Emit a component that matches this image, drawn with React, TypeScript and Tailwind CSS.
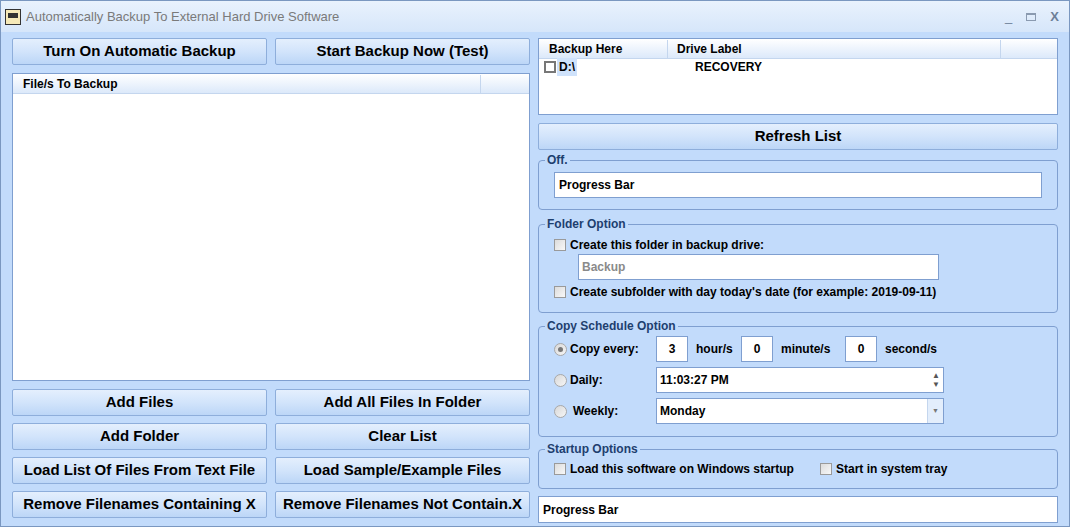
import React from "react";

const btn =
  "h-[27px] rounded-[2px] border border-[#8eaedb] bg-gradient-to-b from-[#e4effd] via-[#d2e4fb] to-[#bcd6f7] text-[15px] font-bold text-black flex items-center justify-center";
const group = "relative rounded-[4px] border border-[#7f9fd0] px-[15px]";
const legend =
  "absolute -top-[9px] left-[6px] bg-[#c2dbfb] px-[2px] text-[12px] font-bold leading-[16px] text-[#1e3f6f]";
const chk = "inline-block h-[12px] w-[12px] border border-[#9a9a9a] bg-gradient-to-br from-[#dcdcdc] to-[#f8f8f8]";
const radio = "inline-block h-[13px] w-[13px] rounded-full border border-[#a8a8a8] bg-gradient-to-br from-[#d8d8d8] to-[#f6f6f6]";
const field = "h-[26px] border border-[#7f9fd0] bg-white flex items-center";

export default function App() {
  return (
    <div
      className="h-[527px] w-[1070px] overflow-hidden border border-[#7a97c0] bg-[#c2dbfb] text-[12px] font-bold text-black"
      style={{ fontFamily: '"Liberation Sans", Arial, sans-serif' }}
    >
      <div className="flex h-[31px] items-center bg-gradient-to-b from-[#e9f2fd] to-[#d6e6fa] pl-[4px] pr-[10px] font-normal">
        <div className="mr-[5px] h-[16px] w-[16px] border border-[#333] bg-[#f5e9b8] text-[8px] leading-[14px]">
          <div className="mx-[2px] mt-[3px] h-[5px] bg-[#333]" />
        </div>
        <span className="text-[13px] text-[#7a7a7a]">Automatically Backup To External Hard Drive Software</span>
        <div className="ml-auto flex items-center gap-[14px] text-[13px] text-[#6d7f97]">
          <span>_</span>
          <span className="inline-block h-[8px] w-[10px] border border-[#8a9ab0] border-t-2" />
          <span className="font-bold">X</span>
        </div>
      </div>

      <div className="flex gap-[8px] px-[11px] pt-[6px]">
        {/* left */}
        <div className="flex w-[520px] flex-col">
          <div className="grid grid-cols-2 gap-[8px]">
            <div className={btn}>Turn On Automatic Backup</div>
            <div className={btn}>Start Backup Now (Test)</div>
          </div>
          <div className="mt-[8px] h-[308px] border border-[#7f9fd0] bg-white">
            <div className="flex h-[20px] items-center border-b border-[#c4d6ee] bg-gradient-to-b from-white to-[#dce9fa]">
              <span className="w-[468px] border-r border-[#c4d6ee] pl-[10px]">File/s To Backup</span>
            </div>
          </div>
          <div className="mt-[8px] grid grid-cols-2 gap-x-[8px] gap-y-[7px]">
            <div className={btn}>Add Files</div>
            <div className={btn}>Add All Files In Folder</div>
            <div className={btn}>Add Folder</div>
            <div className={btn}>Clear List</div>
            <div className={btn}>Load List Of Files From Text File</div>
            <div className={btn}>Load Sample/Example Files</div>
            <div className={btn}>Remove Filenames Containing X</div>
            <div className={btn}>Remove Filenames Not Contain.X</div>
          </div>
        </div>

        {/* right */}
        <div className="flex w-[520px] flex-col">
          <div className="h-[77px] border border-[#7f9fd0] bg-white">
            <div className="flex h-[20px] items-center border-b border-[#c4d6ee] bg-gradient-to-b from-white to-[#dce9fa]">
              <span className="w-[129px] border-r border-[#c4d6ee] pl-[10px]">Backup Here</span>
              <span className="w-[333px] border-r border-[#c4d6ee] pl-[9px]">Drive Label</span>
            </div>
            <div className="flex h-[16px] items-center pl-[5px]">
              <span className="inline-block h-[12px] w-[12px] border-2 border-[#777]" />
              <span className="ml-[1px] w-[20px] bg-[#cfe2fb] pl-[2px]">D:\</span>
              <span className="ml-[118px]">RECOVERY</span>
            </div>
          </div>
          <div className={btn + " mt-[8px]"}>Refresh List</div>

          <div className={group + " mt-[10px] h-[50px] pt-[11px]"}>
            <span className={legend}>Off.</span>
            <div className={field + " w-[488px] pl-[4px]"}>Progress Bar</div>
          </div>

          <div className={group + " mt-[14px] h-[89px] pt-[13px]"}>
            <span className={legend}>Folder Option</span>
            <div className="flex items-center gap-[4px] leading-[14px]">
              <span className={chk} />Create this folder in backup drive:
            </div>
            <div className={field + " mt-[2px] ml-[24px] h-[23px] w-[361px] pl-[3px] font-bold text-[#8a8a8a]"}>Backup</div>
            <div className="mt-[5px] flex items-center gap-[4px] leading-[14px]">
              <span className={chk} />Create subfolder with day today's date (for example: 2019-09-11)
            </div>
          </div>

          <div className={group + " mt-[13px] h-[111px] pt-[9px]"}>
            <span className={legend}>Copy Schedule Option</span>
            <div className="flex h-[26px] items-center">
              <span className={radio + " relative"}>
                <span className="absolute left-[3px] top-[3px] h-[5px] w-[5px] rounded-full bg-[#777]" />
              </span>
              <span className="ml-[3px] w-[86px]">Copy every:</span>
              <div className={field + " h-[24px] w-[32px] justify-center"}>3</div>
              <span className="ml-[8px] w-[45px]">hour/s</span>
              <div className={field + " h-[24px] w-[32px] justify-center"}>0</div>
              <span className="ml-[8px] w-[64px]">minute/s</span>
              <div className={field + " h-[24px] w-[32px] justify-center"}>0</div>
              <span className="ml-[8px]">second/s</span>
            </div>
            <div className="mt-[5px] flex h-[26px] items-center">
              <span className={radio} />
              <span className="ml-[3px] w-[86px]">Daily:</span>
              <div className={field + " w-[288px] pl-[3px]"}>
                <span>11:03:27 PM</span>
                <span className="ml-auto mr-[3px] flex flex-col text-[8px] leading-[9px] text-[#555]">
                  <span>▲</span>
                  <span>▼</span>
                </span>
              </div>
            </div>
            <div className="mt-[5px] flex h-[26px] items-center">
              <span className={radio} />
              <span className="ml-[6px] w-[83px]">Weekly:</span>
              <div className={field + " w-[288px] pl-[3px]"}>
                <span>Monday</span>
                <span className="ml-auto flex h-full w-[16px] items-center justify-center border-l border-[#c4d6ee] bg-[#e3eefc] text-[7px] text-[#777]">▼</span>
              </div>
            </div>
          </div>

          <div className={group + " mt-[12px] h-[40px] pt-[12px]"}>
            <span className={legend}>Startup Options</span>
            <div className="flex items-center leading-[14px]">
              <span className={chk} />
              <span className="ml-[4px] w-[250px]">Load this software on Windows startup</span>
              <span className={chk} />
              <span className="ml-[4px]">Start in system tray</span>
            </div>
          </div>

          <div className={field + " mt-[7px] h-[27px] pl-[4px]"}>Progress Bar</div>
        </div>
      </div>
    </div>
  );
}
